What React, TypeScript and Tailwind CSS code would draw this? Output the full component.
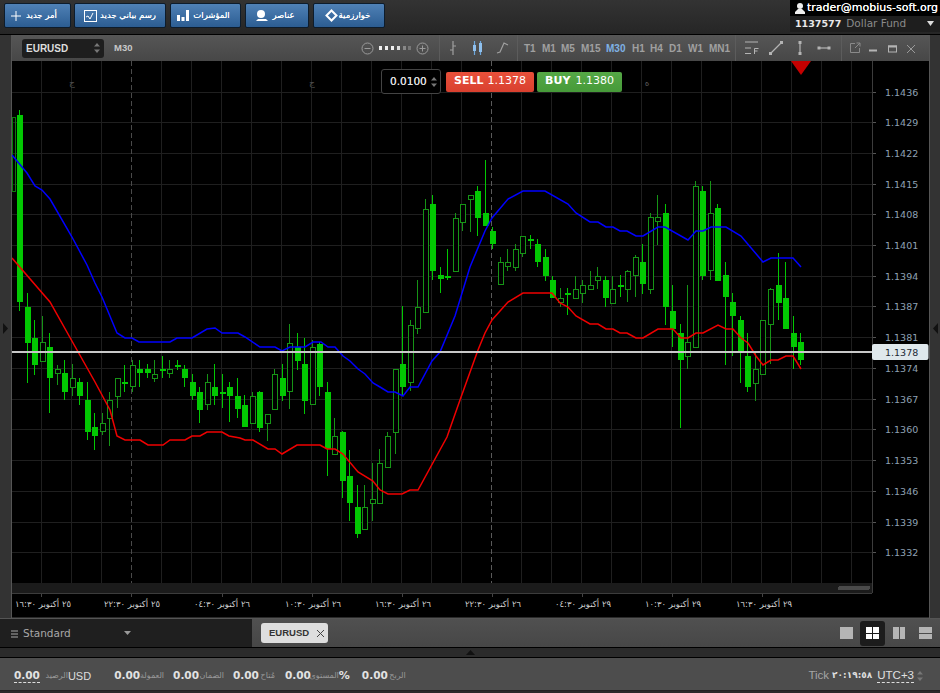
import React from "react";

type C = [number, number, number, number, number]; // high, bodyTop, bodyBottom, low, filled
const candles: C[] = [
  [110,115,302,311,1],[293,307,343,383,1],[320,338,365,375,1],[316,342,361,361,0],[333,347,378,413,1],
  [365,369,373,385,0],[360,373,392,400,1],[364,378,387,396,0],[378,382,396,405,1],[382,400,432,440,1],
  [413,427,436,450,1],[413,423,431,435,0],[392,400,418,446,0],[378,378,396,408,0],[365,382,384,392,1],
  [360,365,386,392,0],[360,369,373,387,1],[364,369,373,378,1],[360,374,378,382,0],[356,369,371,378,1],
  [360,369,373,378,0],[360,365,367,370,1],[365,369,378,387,1],[374,382,396,400,1],[387,392,410,423,1],
  [374,382,404,410,0],[364,387,396,405,1],[374,392,394,408,1],[382,387,396,422,1],[378,396,409,418,1],
  [395,405,427,427,1],[392,396,423,423,0],[391,392,428,432,1],[414,414,423,441,0],[369,374,409,409,0],
  [364,378,396,401,1],[324,343,391,409,0],[333,347,361,370,1],[338,364,401,414,1],[340,347,404,404,0],
  [342,344,387,396,1],[382,392,449,476,1],[418,436,454,454,0],[431,432,481,498,1],[450,476,503,521,1],
  [485,507,534,538,1],[485,507,529,529,0],[463,499,503,521,0],[449,463,503,503,0],[432,436,467,467,0],
  [369,369,432,454,0],[306,364,387,396,1],[320,325,382,391,0],[280,307,328,334,0],[199,209,312,312,0],
  [195,204,271,280,1],[267,275,279,293,1],[249,276,278,280,1],[213,218,271,271,0],[204,204,222,231,0],
  [195,195,199,232,0],[186,191,218,236,1],[160,213,226,226,1],[227,231,244,249,1],[257,262,284,284,0],
  [249,262,266,271,0],[244,249,267,271,0],[236,236,253,257,0],[235,239,241,249,1],[239,244,262,267,1],
  [249,257,276,281,1],[276,280,298,298,1],[288,298,302,307,0],[288,293,295,315,1],[276,289,298,298,0],
  [280,285,293,303,0],[271,285,289,289,0],[267,276,280,289,0],[276,280,298,307,1],[276,289,303,303,0],
  [275,285,286,297,1],[270,271,289,302,0],[255,257,275,297,0],[244,262,284,294,1],[213,217,289,294,0],
  [195,217,221,245,0],[204,213,307,325,1],[285,311,329,347,1],[324,333,360,428,1],[285,342,356,369,0],
  [181,186,347,347,0],[186,191,276,280,1],[181,213,270,280,0],[204,208,281,281,1],[262,275,297,365,1],
  [293,302,316,356,1],[316,320,352,383,1],[333,356,387,392,1],[352,369,383,401,0],[320,320,374,374,0],
  [288,289,324,364,0],[253,285,303,320,1],[262,298,329,329,1],[316,333,347,369,1],[333,342,360,365,1],
];

const blue = "12,155 27,173 35,186 42,190 50,199 72,237 87,265 95,283 102,297 117,333 125,338 132,338 139,342 170,342 177,338 192,338 207,329 215,328 222,333 238,333 245,337 260,347 275,347 282,351 290,347 305,347 313,342 321,342 328,347 335,347 343,356 350,361 358,369 365,374 373,383 380,387 388,392 395,392 403,396 410,387 418,387 432,361 440,352 455,316 470,267 485,231 492,218 508,199 523,191 545,191 568,204 576,213 590,222 598,222 606,227 613,227 620,231 627,231 636,236 643,236 658,227 665,227 688,240 696,231 703,231 711,227 726,227 741,236 763,262 771,258 793,258 801,267";
const red = "12,258 50,302 77,350 95,382 110,410 117,436 125,440 140,440 148,445 163,445 170,440 185,440 192,436 200,436 207,432 222,432 229,436 240,438 245,440 253,440 268,449 275,449 282,454 297,445 320,445 327,449 335,449 343,454 358,472 373,481 380,490 388,494 402,494 410,490 418,490 447,437 460,400 478,350 485,333 492,320 508,302 523,293 552,293 560,303 568,307 576,316 590,324 598,324 606,329 613,329 620,333 627,333 636,338 643,338 658,329 673,329 681,338 688,338 696,333 703,333 718,325 726,329 733,329 741,338 748,343 756,356 763,365 771,360 778,360 786,356 793,356 801,369";

const prices = ["1.1436","1.1429","1.1422","1.1415","1.1408","1.1401","1.1394","1.1387","1.1381","1.1374","1.1367","1.1360","1.1353","1.1346","1.1339","1.1332"];
const hy = [92,122,153,184,214,245,276,306,337,368,399,429,460,491,522,552];
const vx = Array.from({ length: 28 }, (_, i) => 41.5 + 30 * i);
const dateLabels: [number, string][] = [
  [43,"٢٥ أكتوبر ١٦:٣٠"],[132,"٢٥ أكتوبر ٢٢:٣٠"],[222,"٢٦ أكتوبر ٠٤:٣٠"],[313,"٢٦ أكتوبر ١٠:٣٠"],[403,"٢٦ أكتوبر ١٦:٣٠"],
  [493,"٢٦ أكتوبر ٢٢:٣٠"],[583,"٢٩ أكتوبر ٠٤:٣٠"],[673,"٢٩ أكتوبر ١٠:٣٠"],[764,"٢٩ أكتوبر ١٦:٣٠"],
];
const ticks = [41.5,131.5,222,312,402,492,582,672,762];

function Chart() {
  return (
    <svg viewBox="12 61 917 556" className="block w-[917px] h-[556px]" style={{ fontFamily: '"DejaVu Sans", sans-serif' }}>
      <rect x="12" y="61" width="917" height="556" fill="#000" />
      <g shapeRendering="crispEdges">
        {vx.map((x) => (x === 131.5 || x === 491.5 ? null : <line key={x} x1={x} x2={x} y1="61" y2="583" stroke="#1f1f1f" />))}
        {hy.map((y) => <line key={y} x1="12" x2="872" y1={y + 0.5} y2={y + 0.5} stroke="#1f1f1f" />)}
        <line x1="131.5" x2="131.5" y1="61" y2="583" stroke="#4a4a4a" strokeDasharray="5 3" />
        <line x1="491.5" x2="491.5" y1="61" y2="583" stroke="#5a5a5a" strokeDasharray="5 3" />
        <rect x="12" y="117" width="3" height="74" fill="none" stroke="#0d7a0d" />
        {candles.map((c, i) => {
          const x = Math.floor(19.5 + 7.51 * i);
          const [h, t, b, l, f] = c;
          const col = f ? "#02c802" : "#169416";
          return (
            <g key={i}>
              <rect x={x} y={h} width="1" height={l - h} fill={col} />
              {f ? (
                <rect x={x - 2} y={t} width="6" height={Math.max(b - t, 2)} fill={col} />
              ) : (
                <rect x={x - 2 + 0.5} y={t + 0.5} width="5" height={Math.max(b - t, 3)} fill="#000" stroke={col} />
              )}
            </g>
          );
        })}
      </g>
      <polyline points={blue} fill="none" stroke="#0000ff" strokeWidth="1.5" />
      <polyline points={red} fill="none" stroke="#f00000" strokeWidth="1.5" />
      <g shapeRendering="crispEdges">
        <rect x="12" y="351" width="860" height="2" fill="#c8c8c8" />
        <rect x="12" y="583" width="860" height="10" fill="#1b1b1b" />
        <rect x="838" y="586" width="32" height="4" rx="2" fill="#4a4a4a" />
        <line x1="872.5" x2="872.5" y1="61" y2="593" stroke="#3c3c3c" />
        <line x1="12" x2="872" y1="593.5" y2="593.5" stroke="#3c3c3c" />
        {ticks.map((x) => <line key={x} x1={x} x2={x} y1="594" y2="597" stroke="#444" />)}
        {hy.map((y) => <line key={y} x1="873" x2="876" y1={y + 0.5} y2={y + 0.5} stroke="#555" />)}
      </g>
      {prices.map((p, i) => (
        <text key={p} x="885" y={hy[i] + 4} className="text-[9.5px] fill-[#8fa2b4]">{p}</text>
      ))}
      <rect x="872" y="344" width="56.5" height="16" rx="2" fill="#dfe8ec" />
      <text x="885" y="356" className="text-[9.5px] fill-[#1c2a36]">1.1378</text>
      {dateLabels.map(([x, s]) => (
        <text key={x} x={x} y="607" textAnchor="middle" direction="rtl" className="text-[8.5px] fill-[#cfcfcf]">{s}</text>
      ))}
      <text x="72" y="86" textAnchor="middle" className="text-[9px] fill-[#555]">ج</text>
      <text x="312" y="86" textAnchor="middle" className="text-[9px] fill-[#555]">ج</text>
      <text x="647" y="86" textAnchor="middle" className="text-[9px] fill-[#555]">ه</text>
      <polygon points="791,61 811,61 801,75" fill="#c40000" />
    </svg>
  );
}

function Btn({ w, icon, label, gap }: { w: string; icon: React.ReactNode; label: string; gap: string }) {
  return (
    <div className={`${w} ${gap} h-[25px] flex items-center justify-center rounded-[2px] border border-[#0d1c2c] bg-gradient-to-b from-[#4f81b6] to-[#2c5d92] text-white text-[8.5px] [text-shadow:0_0_0.6px_white]`}>
      {icon}
      <span dir="rtl" className="whitespace-nowrap">{label}</span>
    </div>
  );
}

function IconBtn({ children, w = 16 }: { children: React.ReactNode; w?: number }) {
  return <svg width={w} height="16" viewBox={`0 0 ${w} 16`} className="block shrink-0" fill="none" stroke="#b4b4b4" strokeWidth="1.2">{children}</svg>;
}

const tfs: [string, string][] = [["T1","w-[18px]"],["M1","w-[19px]"],["M5","w-[20px]"],["M15","w-[25px]"],["M30","w-[26px]"],["H1","w-[18px]"],["H4","w-[19px]"],["D1","w-[19px]"],["W1","w-[21px]"],["MN1","w-[26px]"]];

function Updown() {
  return (
    <svg width="6" height="12" viewBox="0 0 6 12" className="block shrink-0">
      <polygon points="3,1 6,4.5 0,4.5" fill="#777" />
      <polygon points="0,7.5 6,7.5 3,11" fill="#777" />
    </svg>
  );
}

function Stat({ v, l, w, cls = "" }: { v: string; l: string; w: string; cls?: string }) {
  return (
    <span className={`flex items-center ${cls}`}>
      <span className="font-bold text-[10.5px] text-[#e2e2e2]">{v}</span>
      <span dir="rtl" className={`${w} text-[8px] text-[#999] whitespace-nowrap`}>{l}</span>
    </span>
  );
}

export default function App() {
  return (
    <div className="w-[940px] h-[693px] overflow-hidden flex flex-col bg-[#2a2a2a] font-['DejaVu_Sans',sans-serif]">
      {/* top bar */}
      <div className="h-[35px] shrink-0 flex justify-between bg-gradient-to-b from-[#333] to-[#262626] border-b border-black">
        <div className="flex items-start gap-[4px] pl-[4px] pt-[3px]">
          <Btn w="w-[67px] -mr-[1px] pr-[7px]" gap="gap-[5px]" label="أمر جديد" icon={
            <svg width="10" height="10" viewBox="0 0 10 10" className="block"><path d="M5 0v10M0 5h10" stroke="#fff" strokeWidth="1" /></svg>} />
          <Btn w="w-[92px]" gap="gap-[3px]" label="رسم بياني جديد" icon={
            <svg width="13" height="12" viewBox="0 0 13 12" className="block" fill="none" stroke="#fff"><rect x=".5" y=".5" width="12" height="11" /><path d="M2 7l2-1 2 3 3-6" /></svg>} />
          <Btn w="w-[71px] pr-[4px]" gap="gap-[4px]" label="المؤشرات" icon={
            <svg width="12" height="11" viewBox="0 0 12 11" className="block" fill="#fff"><rect x="0" y="5" width="3" height="6" /><rect x="4.5" y="7" width="3" height="4" /><rect x="9" y="0" width="3" height="11" /></svg>} />
          <Btn w="w-[64px] pr-[3px]" gap="gap-[4px]" label="عناصر" icon={
            <svg width="12" height="11" viewBox="0 0 12 11" className="block" fill="#fff"><circle cx="5" cy="4" r="4" /><path d="M2 9h8l2 2H0z" /></svg>} />
          <Btn w="w-[72px] pr-[3px]" gap="gap-[1px]" label="خوارزمية" icon={
            <svg width="13" height="13" viewBox="0 0 13 13" className="block" fill="none" stroke="#fff" strokeWidth="2"><path d="M6.5 1.5l5 5-5 5-5-5z" /></svg>} />
        </div>
        <div className="w-[150px] h-[32px] flex flex-col">
          <div className="h-[16px] bg-black flex items-center pl-[5px] gap-[2px] text-[11px] text-white [text-shadow:0_0_0.5px_white]">
            <svg width="10" height="11" viewBox="0 0 10 11" className="block" fill="#eee"><circle cx="5" cy="3" r="3" /><path d="M3 6h4l3 3v2H0V9z" /></svg>
            <span className="whitespace-nowrap">trader@mobius-soft.org</span>
          </div>
          <div className="h-[16px] bg-[#1e1e1e] flex items-center pl-[5px] text-[10.5px] relative">
            <span className="font-bold text-[9.5px] text-[#e8e8e8]">1137577</span>
            <span className="ml-[5px] text-[#8a8a8a]">Dollar Fund</span>
            <svg width="7" height="5" viewBox="0 0 7 5" className="absolute right-[6px] top-[5px]"><polygon points="0,0 7,0 3.5,5" fill="#ddd" /></svg>
          </div>
        </div>
      </div>

      {/* main */}
      <div className="h-[583px] shrink-0 flex">
        <div className="w-[12px] flex items-center bg-[#333] border-r border-[#555]">
          <svg width="7" height="11" viewBox="0 0 7 11" className="ml-[2px] mt-[4px]"><polygon points="1,0 6,5.5 1,11" fill="#111" /></svg>
        </div>
        <div className="w-[917px] flex flex-col">
          <div className="h-[26px] shrink-0 flex items-center bg-gradient-to-b from-[#565656] to-[#474747] text-[#a8a8a8]">
            <div className="w-[427px] shrink-0 flex items-center font-['Liberation_Sans',sans-serif]">
              <div className="ml-[10px] w-[82px] h-[19px] rounded-[3px] bg-[#1e1e1e] flex items-center justify-between px-[4px]">
                <span className="text-[10px] font-bold text-[#ddd]">EURUSD</span>
                <Updown />
              </div>
              <span className="ml-[10px] text-[9.5px] font-bold text-[#c8c8c8]">M30</span>
              <div className="ml-auto mr-[10px] flex items-center gap-[5px]">
                <svg width="13" height="13" viewBox="0 0 13 13" fill="none" stroke="#9a9a9a" className="block"><circle cx="6.5" cy="6.5" r="5.5" /><path d="M3.5 6.5h6" /></svg>
                <svg width="32" height="6" viewBox="0 0 32 6" className="block">
                  <rect x="0" y="1" width="3" height="4" fill="#eee" /><rect x="6" y="1" width="3" height="4" fill="#eee" /><rect x="12" y="1" width="3" height="4" fill="#eee" /><rect x="18" y="1" width="3" height="4" fill="#ddd" /><rect x="24" y="1" width="3" height="4" fill="#888" /><rect x="29" y="1" width="3" height="4" fill="#777" />
                </svg>
                <svg width="13" height="13" viewBox="0 0 13 13" fill="none" stroke="#9a9a9a" className="block"><circle cx="6.5" cy="6.5" r="5.5" /><path d="M3.5 6.5h6M6.5 3.5v6" /></svg>
              </div>
            </div>
            <div className="h-[26px] w-[78px] shrink-0 border-l border-[#5c5c5c] flex items-center pl-[5px] gap-[9px]">
              <IconBtn><path d="M8 1v14" stroke="#a0a0a0" /><path d="M8 6h3M5 10h3" stroke="#a0a0a0" /></IconBtn>
              <IconBtn><path d="M4.5 1v14M10.5 1v14" stroke="#6fa8dc" /><rect x="3" y="5" width="3" height="6" fill="#8fc0ee" stroke="none" /><rect x="9" y="3" width="3" height="9" fill="#8fc0ee" stroke="none" /></IconBtn>
              <IconBtn><path d="M2 13l3-1 4-9 4 2" stroke="#a0a0a0" /></IconBtn>
            </div>
            <div className="h-[26px] w-[218px] shrink-0 border-l border-[#5c5c5c] flex items-center pl-[6px] text-[10px] font-bold font-['Liberation_Sans',sans-serif]">
              {tfs.map(([t, w]) => (
                <span key={t} className={`${w} shrink-0 ${t === "M30" ? "text-[#7fb2e5]" : "text-[#a0a0a0]"}`}>{t}</span>
              ))}
            </div>
            <div className="h-[26px] w-[106px] shrink-0 border-l border-[#5c5c5c] flex items-center pl-[8px] gap-[8px]">
              <IconBtn w={16}><path d="M1 2h13M1 8h6M1 13.5h6" strokeWidth="1" /><path d="M10.5 14V8.5h4M10.5 11h3" strokeWidth="1" /></IconBtn>
              <IconBtn w={16}><path d="M3 13L13 3" /><rect x="1" y="12" width="3" height="3" fill="#b4b4b4" stroke="none" /><rect x="12" y="1" width="3" height="3" fill="#b4b4b4" stroke="none" /></IconBtn>
              <IconBtn w={16}><path d="M8 3v10" /><rect x="6.5" y="1" width="3" height="3" fill="#b4b4b4" stroke="none" /><rect x="6.5" y="12" width="3" height="3" fill="#b4b4b4" stroke="none" /></IconBtn>
              <IconBtn w={16}><path d="M3 8h10" /><rect x="1.5" y="6.5" width="3" height="3" fill="#b4b4b4" stroke="none" /><rect x="11.5" y="6.5" width="3" height="3" fill="#b4b4b4" stroke="none" /></IconBtn>
            </div>
            <div className="h-[26px] flex-1 border-l border-[#5c5c5c] flex items-center pl-[5px] gap-[3px]">
              <IconBtn><path d="M8 3.5H3.5v9h9V8M8 8l5-5M9.5 3H13v3.5" stroke="#8a8a8a" strokeWidth="1" /></IconBtn>
              <IconBtn><path d="M3 10.5h8" strokeWidth="2" /></IconBtn>
              <IconBtn><rect x="3.5" y="6" width="8" height="6" strokeWidth="1" /><path d="M3 6.5h9" strokeWidth="2" /></IconBtn>
              <IconBtn><path d="M3 5l8 8M11 5l-8 8" stroke="#9a9a9a" strokeWidth="1" /></IconBtn>
            </div>
          </div>
          <div className="relative h-[556px]">
            <Chart />
            <div className="absolute left-[369px] top-[8px] flex items-center">
              <div className="w-[60px] h-[25px] rounded-[3px] bg-black border border-[#444] flex items-center justify-between pl-[8px] pr-[3px]">
                <span className="text-[10.5px] text-[#e0e0e0] [text-shadow:0_0_0.5px_#e0e0e0]">0.0100</span>
                <Updown />
              </div>
              <div className="ml-[5px] w-[88px] h-[20px] rounded-[2px] bg-gradient-to-b from-[#e8503a] to-[#d9402f] flex items-center justify-center gap-[4px] text-white text-[11px]">
                <b>SELL</b><span>1.1378</span>
              </div>
              <div className="ml-[3px] w-[85px] h-[20px] rounded-[2px] bg-gradient-to-b from-[#55a846] to-[#469a39] flex items-center justify-center gap-[5px] text-white text-[11px]">
                <b>BUY</b><span>1.1380</span>
              </div>
            </div>
          </div>
        </div>
        <div className="flex-1 flex items-center bg-[#333] border-l border-[#555]">
          <svg width="7" height="11" viewBox="0 0 7 11" className="ml-[2px] mt-[4px]"><polygon points="6,0 1,5.5 6,11" fill="#111" /></svg>
        </div>
      </div>

      {/* tabs */}
      <div className="h-[30px] shrink-0 flex border-t border-[#555] border-b border-b-black">
        <div className="w-[252px] bg-[#1f1f1f] flex items-center pl-[11px] relative">
          <svg width="7" height="8" viewBox="0 0 7 8" className="block mt-[2px]"><path d="M0 1h7M0 4h7M0 7h7" stroke="#aaa" /></svg>
          <span className="ml-[5px] mt-[2px] text-[10.5px] text-[#a8a8a8]">Standard</span>
          <svg width="7" height="4" viewBox="0 0 7 4" className="absolute left-[124px] top-[12px]"><polygon points="0,0 7,0 3.5,4" fill="#999" /></svg>
        </div>
        <div className="flex-1 bg-gradient-to-b from-[#505050] to-[#474747] flex items-center pl-[9px] justify-between pr-[8px]">
          <div className="w-[67px] h-[20px] rounded-[3px] bg-[#dedede] flex items-center pl-[8px] gap-[7px]">
            <span className="text-[9.5px] font-bold text-[#333] font-['Liberation_Sans',sans-serif]">EURUSD</span>
            <svg width="9" height="9" viewBox="0 0 9 9" className="block"><path d="M1 1l7 7M8 1l-7 7" stroke="#444" /></svg>
          </div>
          <div className="flex items-center">
            <div className="w-[13px] h-[12px] bg-[#b5b5b5] mr-[7px]" />
            <div className="w-[25px] h-[25px] rounded-[3px] bg-[#1c1c1c] flex items-center justify-center mr-[8px]">
              <div className="grid grid-cols-2 gap-[1px] w-[13px] h-[12px]">
                <div className="bg-white" /><div className="bg-white" /><div className="bg-white" /><div className="bg-white" />
              </div>
            </div>
            <div className="grid grid-cols-2 gap-[1px] w-[12px] h-[12px] mr-[14px]">
              <div className="bg-[#b5b5b5]" /><div className="bg-[#b5b5b5]" />
            </div>
            <div className="grid grid-rows-2 gap-[1px] w-[13px] h-[12px]">
              <div className="bg-[#b5b5b5]" /><div className="bg-[#b5b5b5]" />
            </div>
          </div>
        </div>
      </div>

      {/* strip */}
      <div className="h-[10px] shrink-0 bg-[#2b2b2b] border-b border-black flex justify-center items-center">
        <svg width="9" height="5" viewBox="0 0 9 5" className="block"><polygon points="0,5 9,5 4.5,0" fill="#111" /></svg>
      </div>

      {/* status */}
      <div className="h-[33px] shrink-0 bg-[#4d4d4d] flex items-center justify-between pl-[14px] pr-[17px] pt-[4px] border-b border-[#222] font-['Liberation_Sans',sans-serif]">
        <div className="flex items-center font-['DejaVu_Sans',sans-serif]">
          <span className="font-bold text-[10.5px] text-[#e2e2e2] border-b border-dashed border-[#ddd] leading-[13px]">0.00</span>
          <span dir="rtl" className="text-[8px] text-[#999] w-[28px] whitespace-nowrap">الرصيد</span>
          <span className="text-[11px] text-[#ddd] font-['Liberation_Sans',sans-serif] mr-[23px]">USD</span>
          <Stat v="0.00" l="العمولة" w="w-[24px]" cls="mr-[9px]" />
          <Stat v="0.00" l="الضمان" w="w-[25px]" cls="mr-[9px]" />
          <Stat v="0.00" l="مُتاح" w="w-[16px]" cls="mr-[10px]" />
          <Stat v="0.00" l="المستوى" w="w-[28px]" />
          <span className="font-bold text-[11px] text-[#e2e2e2] w-[12px] mr-[11px]">%</span>
          <Stat v="0.00" l="الربح" w="w-[18px]" />
        </div>
        <div className="flex items-center text-[11.5px]">
          <span className="text-[#a5a5a5]">Tick</span>
          <span className="ml-[3px] text-[9px] font-bold text-[#ddd] font-['DejaVu_Sans',sans-serif]">٢٠:١٩:٥٨</span>
          <span className="ml-[5px] text-[#e0e0e0] border-b border-dashed border-[#ddd] leading-[13px]">UTC+3</span>
          <span className="ml-[3px]"><Updown /></span>
        </div>
      </div>
    </div>
  );
}
